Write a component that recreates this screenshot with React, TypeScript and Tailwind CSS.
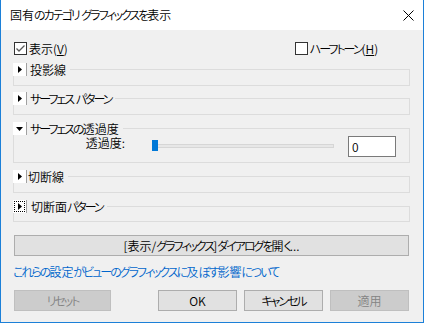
import React from "react";

function T({ s }: { s: string }) {
  const parts = s.match(/[\u3040-\u30ff]+|[^\u3040-\u30ff]+/g) || [];
  return (
    <>
      {parts.map((p, i) =>
        /[\u3040-\u30ff]/.test(p) ? (
          <span key={i} className="tracking-[-2px]">
            {p}
          </span>
        ) : (
          <span key={i}>{p}</span>
        )
      )}
    </>
  );
}

function ArrowRight() {
  return (
    <svg width="4" height="7" viewBox="0 0 4 7">
      <path d="M0 0L4 3.5L0 7Z" fill="#000" />
    </svg>
  );
}

function ArrowDown() {
  return (
    <svg width="7" height="4" viewBox="0 0 7 4">
      <path d="M0 0H7L3.5 4Z" fill="#000" />
    </svg>
  );
}

function Header({
  label,
  open,
  focus,
  labelClass,
}: {
  label: string;
  open?: boolean;
  focus?: boolean;
  labelClass: string;
}) {
  return (
    <div className="-ml-px -mt-[7px] flex h-[13px] items-start">
      <div className="flex h-[13px] w-[14px] items-center justify-center border-r border-[#a0a0a0] bg-white">
        {focus ? (
          <div className="flex h-[11px] w-[11px] items-center justify-center border border-dotted border-black">
            <ArrowRight />
          </div>
        ) : open ? (
          <ArrowDown />
        ) : (
          <ArrowRight />
        )}
      </div>
      <span className={labelClass}>
        <T s={label} />
      </span>
    </div>
  );
}

function CheckBox({ checked }: { checked?: boolean }) {
  return (
    <div className="flex h-[13px] w-[13px] items-center justify-center border border-[#333333] bg-white">
      {checked && (
        <svg width="11" height="11" viewBox="0 0 11 11">
          <path d="M1.5 5.5L4 8L9.5 2.5" stroke="#5a5a5a" strokeWidth="1.3" fill="none" />
        </svg>
      )}
    </div>
  );
}

export default function App() {
  return (
    <div className="flex h-[323px] w-[424px] flex-col border-x border-b border-[#1c80d8] bg-[#f0f0f0] font-['Noto_Sans_CJK_JP','Noto_Sans',sans-serif] text-[12px] font-[350] leading-[13px] text-black [font-feature-settings:'palt']">
      {/* Title bar */}
      <div className="flex h-[30px] shrink-0 items-center justify-between bg-white pl-[9px]">
        <span className="text-[12px] leading-[14px]">
          <T s="固有のカテゴリ グラフィックスを表示" />
        </span>
        <div className="flex h-[30px] w-[30px] items-center justify-center">
          <svg width="11" height="11" viewBox="0 0 11 11">
            <path d="M0.5 0.5L10.5 10.5M10.5 0.5L0.5 10.5" stroke="#000" strokeWidth="1" />
          </svg>
        </div>
      </div>

      {/* Body */}
      <div className="flex flex-1 flex-col pl-[12px] pr-[13px] pt-[12px]">
        {/* Checkboxes row */}
        <div className="flex h-[13px] items-center">
          <div className="ml-px flex items-center gap-[2px]">
            <CheckBox checked />
            <span>
              表示(<span className="underline">V</span>)
            </span>
          </div>
          <div className="ml-[227px] flex items-center gap-[2px]">
            <CheckBox />
            <span>
              <T s="ハーフトーン" />(<span className="underline">H</span>)
            </span>
          </div>
        </div>

        {/* Section 1 */}
        <div className="mt-[14px] h-[17px] border border-[#dcdcdc]">
          <Header label="投影線" labelClass="bg-[#f0f0f0] pl-[3px] pr-[4px]" />
        </div>

        {/* Section 2 */}
        <div className="mt-[12px] h-[17px] border border-[#dcdcdc]">
          <Header label="サーフェス パターン" labelClass="bg-[#f0f0f0] pl-[3px] pr-[4px]" />
        </div>

        {/* Section 3 */}
        <div className="mt-[13px] h-[35px] border border-[#dcdcdc]">
          <Header label="サーフェスの透過度" open labelClass="bg-[#f0f0f0] pl-[3px] pr-[4px]" />
          <div className="mt-[2px] flex h-[21px] items-start">
            <div className="w-[111px] text-right leading-[12px]">透過度:</div>
            <div className="relative ml-[27px] h-[21px] w-[182px]">
              <div className="mt-[7px] h-[4px] w-full border border-[#d6d6d6] bg-[#e7e7e7]" />
              <div className="absolute left-0 top-[3px] h-[11px] w-[6px] bg-[#0078d7]" />
            </div>
            <div className="-mt-px ml-[14px] flex h-[21px] w-[48px] items-center border border-[#7a7a7a] bg-white pl-[3px]">
              0
            </div>
          </div>
        </div>

        {/* Section 4 */}
        <div className="mt-[13px] h-[17px] border border-[#dcdcdc]">
          <Header label="切断線" labelClass="bg-[#f0f0f0] pl-[1px] pr-[4px]" />
        </div>

        {/* Section 5 */}
        <div className="mt-[13px] h-[16px] border border-[#dcdcdc]">
          <Header label="切断面パターン" focus labelClass="bg-[#f0f0f0] pl-[4px] pr-[4px]" />
        </div>

        {/* Big button */}
        <div className="ml-px mt-[13px] flex h-[21px] w-[395px] items-center justify-center border border-[#adadad] bg-[#e1e1e1]">
          <T s="[表示/グラフィックス]ダイアログを開く..." />
        </div>

        {/* Link */}
        <div className="mt-[9px] text-[#0066cc]">
          <T s="これらの設定がビューのグラフィックスに及ぼす影響について" />
        </div>

        {/* Bottom buttons */}
        <div className="ml-px mt-[12px] flex h-[21px] items-start">
          <div className="flex h-[21px] w-[97px] items-center justify-center border border-[#bfbfbf] bg-[#cccccc] text-[#838383]">
            <T s="リセット" />
          </div>
          <div className="ml-[47px] flex h-[21px] w-[79px] items-center justify-center border border-[#adadad] bg-[#e1e1e1]">
            OK
          </div>
          <div className="ml-[7px] flex h-[21px] w-[79px] items-center justify-center border border-[#adadad] bg-[#e1e1e1]">
            <T s="キャンセル" />
          </div>
          <div className="ml-[7px] flex h-[21px] w-[79px] items-center justify-center border border-[#bfbfbf] bg-[#cccccc] text-[#838383]">
            適用
          </div>
        </div>
      </div>
    </div>
  );
}
